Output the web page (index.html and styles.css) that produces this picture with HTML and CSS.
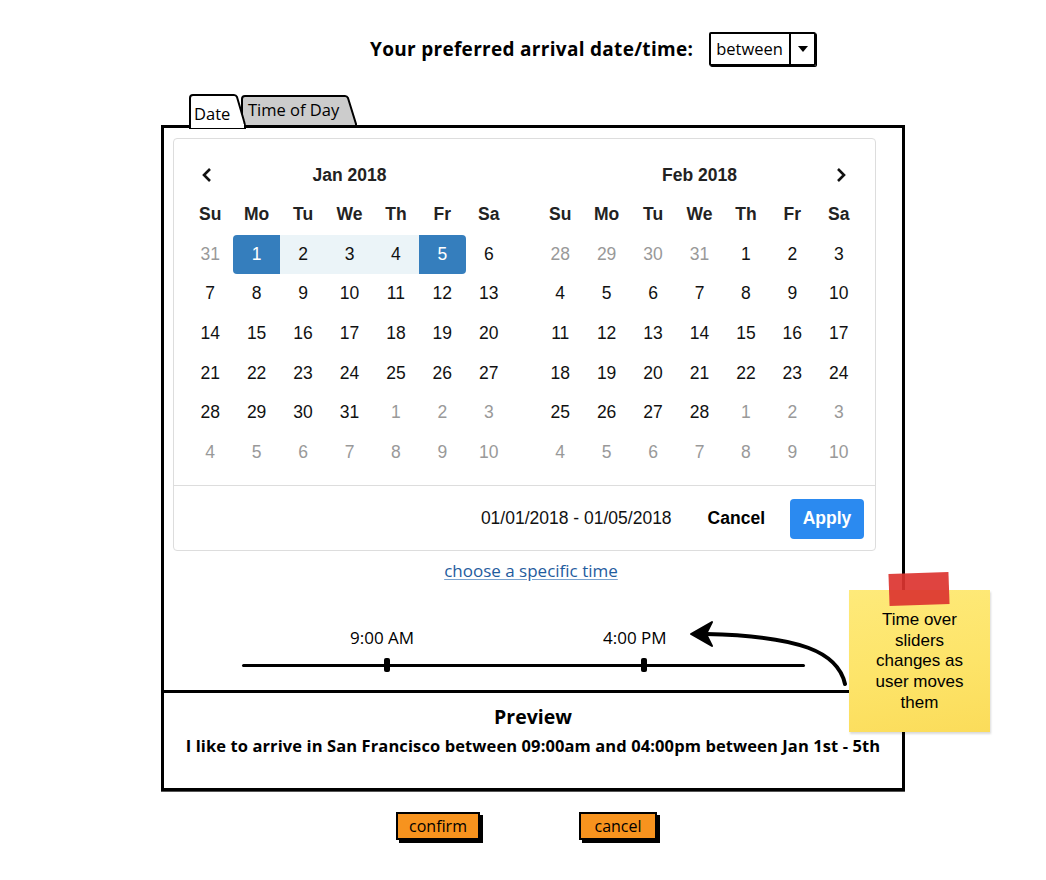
FILE: index.html
```html
<!DOCTYPE html>
<html>
<head>
<meta charset="utf-8">
<link rel="stylesheet" href="styles.css">
</head>
<body>
<div class="page">
  <div class="top">
    <span class="top-label">Your preferred arrival date/time:</span>
    <div class="select">
      <span class="select-value">between</span>
      <span class="select-arrow"><svg width="12" height="8" viewBox="0 0 12 8"><path d="M1 1 L11 1 L6 7 Z" fill="#000"/></svg></span>
    </div>
  </div>

  <div class="tabs">
    <div class="tab tab-active">
      <svg class="tab-shape" viewBox="0 0 56 34" preserveAspectRatio="none"><path d="M1 34 V4 Q1 1 4 1 H45 Q47 1 48 3 L55 27 Q56 30 56 34 Z" fill="#fff" stroke="#000" stroke-width="2"/><rect x="2" y="30" width="53" height="4" fill="#fff"/></svg>
      <span class="tab-text">Date</span>
    </div>
    <div class="tab tab-inactive">
      <svg class="tab-shape" viewBox="0 0 116 31" preserveAspectRatio="none"><path d="M1 31 V4 Q1 1 4 1 H104 Q106 1 107 3 L115 29 V31 Z" fill="#cccccc" stroke="#000" stroke-width="2"/></svg>
      <span class="tab-text">Time of Day</span>
    </div>
  </div>

  <div class="panel">
    <div class="dates">
      <div class="calendar">
        <div class="cal-body">
          <div class="month">
            <div class="nav nav-prev"><svg width="12" height="16" viewBox="0 0 12 16"><path d="M9 2 L3 8 L9 14" fill="none" stroke="#111" stroke-width="2.6"/></svg></div>
            <div class="month-title">Jan 2018</div>
            <div class="nav"></div>
            <div class="dn">Su</div><div class="dn">Mo</div><div class="dn">Tu</div><div class="dn">We</div><div class="dn">Th</div><div class="dn">Fr</div><div class="dn">Sa</div>
            <div class="d off">31</div><div class="d sel-start">1</div><div class="d in-range">2</div><div class="d in-range">3</div><div class="d in-range">4</div><div class="d sel-end">5</div><div class="d">6</div>
            <div class="d">7</div><div class="d">8</div><div class="d">9</div><div class="d">10</div><div class="d">11</div><div class="d">12</div><div class="d">13</div>
            <div class="d">14</div><div class="d">15</div><div class="d">16</div><div class="d">17</div><div class="d">18</div><div class="d">19</div><div class="d">20</div>
            <div class="d">21</div><div class="d">22</div><div class="d">23</div><div class="d">24</div><div class="d">25</div><div class="d">26</div><div class="d">27</div>
            <div class="d">28</div><div class="d">29</div><div class="d">30</div><div class="d">31</div><div class="d off">1</div><div class="d off">2</div><div class="d off">3</div>
            <div class="d off">4</div><div class="d off">5</div><div class="d off">6</div><div class="d off">7</div><div class="d off">8</div><div class="d off">9</div><div class="d off">10</div>
          </div>
          <div class="month">
            <div class="nav"></div>
            <div class="month-title">Feb 2018</div>
            <div class="nav nav-next"><svg width="12" height="16" viewBox="0 0 12 16"><path d="M3 2 L9 8 L3 14" fill="none" stroke="#111" stroke-width="2.6"/></svg></div>
            <div class="dn">Su</div><div class="dn">Mo</div><div class="dn">Tu</div><div class="dn">We</div><div class="dn">Th</div><div class="dn">Fr</div><div class="dn">Sa</div>
            <div class="d off">28</div><div class="d off">29</div><div class="d off">30</div><div class="d off">31</div><div class="d">1</div><div class="d">2</div><div class="d">3</div>
            <div class="d">4</div><div class="d">5</div><div class="d">6</div><div class="d">7</div><div class="d">8</div><div class="d">9</div><div class="d">10</div>
            <div class="d">11</div><div class="d">12</div><div class="d">13</div><div class="d">14</div><div class="d">15</div><div class="d">16</div><div class="d">17</div>
            <div class="d">18</div><div class="d">19</div><div class="d">20</div><div class="d">21</div><div class="d">22</div><div class="d">23</div><div class="d">24</div>
            <div class="d">25</div><div class="d">26</div><div class="d">27</div><div class="d">28</div><div class="d off">1</div><div class="d off">2</div><div class="d off">3</div>
            <div class="d off">4</div><div class="d off">5</div><div class="d off">6</div><div class="d off">7</div><div class="d off">8</div><div class="d off">9</div><div class="d off">10</div>
          </div>
        </div>
        <div class="cal-footer">
          <span class="range-text">01/01/2018 - 01/05/2018</span>
          <span class="btn-cancel">Cancel</span>
          <span class="btn-apply">Apply</span>
        </div>
      </div>

      <div class="link-row"><a class="link" href="#">choose a specific time</a></div>

      <div class="slider">
        <span class="slider-label" style="left:108px">9:00 AM</span>
        <span class="slider-label" style="left:361px">4:00 PM</span>
        <div class="track"></div>
        <div class="handle" style="left:142px"></div>
        <div class="handle" style="left:399px"></div>
      </div>
    </div>

    <div class="preview">
      <div class="preview-title">Preview</div>
      <div class="preview-text">I like to arrive in San Francisco between 09:00am and 04:00pm between Jan 1st - 5th</div>
    </div>
  </div>

  <div class="actions">
    <span class="btn-orange btn-confirm">confirm</span>
    <span class="btn-orange btn-cancel2">cancel</span>
  </div>

  <svg class="arrow" width="1046" height="880" viewBox="0 0 1046 880">
    <path d="M845 684 C 838 652, 800 636, 706 634" fill="none" stroke="#000" stroke-width="4" stroke-linecap="round"/>
    <path d="M691 634 L712 622 L706 634 L712 646 Z" fill="#000" stroke="#000" stroke-width="2" stroke-linejoin="round"/>
  </svg>

  <div class="sticky">
    <div class="tape"></div>
    <div class="sticky-text">
      <div class="sticky-line">Time over</div>
      <div class="sticky-line">sliders</div>
      <div class="sticky-line">changes as</div>
      <div class="sticky-line">user moves</div>
      <div class="sticky-line">them</div>
    </div>
  </div>
</div>
</body>
</html>
```

FILE: styles.css
```css
* { box-sizing: border-box; }
html, body { margin: 0; padding: 0; background: #fff; }
body { font-family: "Open Sans", "Noto Sans", sans-serif; color: #000; }
.page { position: relative; width: 1046px; height: 880px; padding-top: 32px; }

.top { display: flex; align-items: center; margin-left: 370px; height: 33px; }
.top-label { font-family: "Open Sans", sans-serif; font-weight: 700; font-size: 19px; letter-spacing: 0.3px; margin-right: 16px; }
.select { display: flex; width: 107px; height: 34px; border: 2px solid #000; border-radius: 2px; box-shadow: 1px 1px 0 #000; }
.select-value { flex: 1; display: flex; align-items: center; padding-left: 5px; font-size: 16.5px; }
.select-arrow { width: 25px; border-left: 2px solid #000; display: flex; align-items: center; justify-content: center; }

.tabs { display: flex; align-items: flex-start; margin: 29px 0 -3px 189px; height: 34px; position: relative; z-index: 2; }
.tab { position: relative; display: flex; align-items: center; }
.tab-shape { position: absolute; left: 0; top: 0; width: 100%; height: 100%; z-index: -1; overflow: visible; }
.tab-active { width: 56px; height: 34px; z-index: 2; }
.tab-active .tab-text { padding: 4px 0 0 5px; font-size: 16.5px; }
.tab-inactive { width: 116px; height: 31px; margin: 1px 0 0 -4px; z-index: 1; }
.tab-inactive .tab-text { padding: 0 0 2px 7px; font-size: 16.5px; }

.panel { margin-left: 161px; width: 744px; border: 3px solid #000; box-shadow: 0 1px 0 #555; position: relative; z-index: 1; }
.dates { padding: 10px 0 12px 9px; }

.calendar { width: 703px; border: 1px solid #ddd; border-radius: 4px; font-family: "Liberation Sans", Arial, sans-serif; font-size: 17.5px; color: #111; }
.cal-body { display: flex; gap: 25px; padding: 16px 13px 13px; }
.month { width: 325px; display: grid; grid-template-columns: repeat(7, 1fr); grid-template-rows: 40px 39.5px repeat(6, 39.6px); }
.nav { display: flex; align-items: center; justify-content: center; }
.nav-prev { padding-right: 6px; }
.nav-next { padding-left: 4px; }
.month-title { grid-column: span 5; display: flex; align-items: center; justify-content: center; font-weight: 700; color: #222; }
.dn { display: flex; align-items: center; justify-content: center; font-weight: 700; color: #222; }
.d { display: flex; align-items: center; justify-content: center; color: #111; }
.d.off { color: #999; }
.d.in-range { background: #ebf4f8; }
.d.sel-start, .d.sel-end { background: #357ebd; color: #fff; }
.d.sel-start { border-radius: 4px 0 0 4px; }
.d.sel-end { border-radius: 0 4px 4px 0; }

.cal-footer { border-top: 1px solid #ddd; height: 65px; display: flex; align-items: center; justify-content: flex-end; padding: 1px 11px 0 0; }
.range-text { color: #111; margin-right: 36px; }
.btn-cancel { font-weight: 700; color: #000; margin-right: 25px; }
.btn-apply { width: 74px; height: 40px; border-radius: 4px; background: #2b8af0; color: #fff; font-weight: 700; display: flex; align-items: center; justify-content: center; }

.link-row { margin-top: 9px; height: 22px; text-align: center; padding-right: 13px; }
.link { font-size: 17px; line-height: 22px; color: #1f5c9e; text-decoration: underline; text-decoration-color: #7aa3cf; text-underline-offset: 2px; }

.slider { position: relative; margin: 46px 0 0 69px; width: 563px; height: 50px; }
.slider-label { position: absolute; top: 0; line-height: 20px; font-size: 17px; }
.track { position: absolute; left: 0; right: 0; top: 36px; height: 3px; background: #000; border-radius: 2px; }
.handle { position: absolute; top: 30px; width: 6px; height: 14px; background: #000; border-radius: 2px; }

.preview { border-top: 3px solid #000; padding: 11px 0 31px; text-align: center; }
.preview-title { font-size: 19.5px; font-weight: 700; line-height: 26px; }
.preview-text { font-size: 16.5px; font-weight: 700; line-height: 22px; margin-top: 5px; letter-spacing: 0.1px; }

.actions { display: flex; margin: 21px 0 0 396px; }
.btn-orange { display: flex; align-items: center; justify-content: center; height: 28px; background: #f7931e; border: 2px solid #000; box-shadow: 3px 3px 0 #000; font-size: 16px; }
.btn-confirm { width: 84px; }
.btn-cancel2 { width: 78px; margin-left: 99px; }

.arrow { position: absolute; left: 0; top: 0; pointer-events: none; z-index: 3; }

.sticky { position: absolute; left: 849px; top: 590px; width: 141px; height: 142px; background: linear-gradient(170deg, #feea7a 0%, #fde469 55%, #fbdc5a 100%); box-shadow: 1px 2px 2px rgba(0,0,0,0.15); z-index: 4; }
.tape { position: absolute; left: 40px; top: -17px; width: 60px; height: 32px; background: #dc3430; opacity: 0.92; transform: rotate(-2deg); }
.sticky-text { padding-top: 20px; text-align: center; font-family: "Liberation Sans", Arial, sans-serif; font-size: 17px; }
.sticky-line { height: 20.7px; line-height: 20.7px; }
```
